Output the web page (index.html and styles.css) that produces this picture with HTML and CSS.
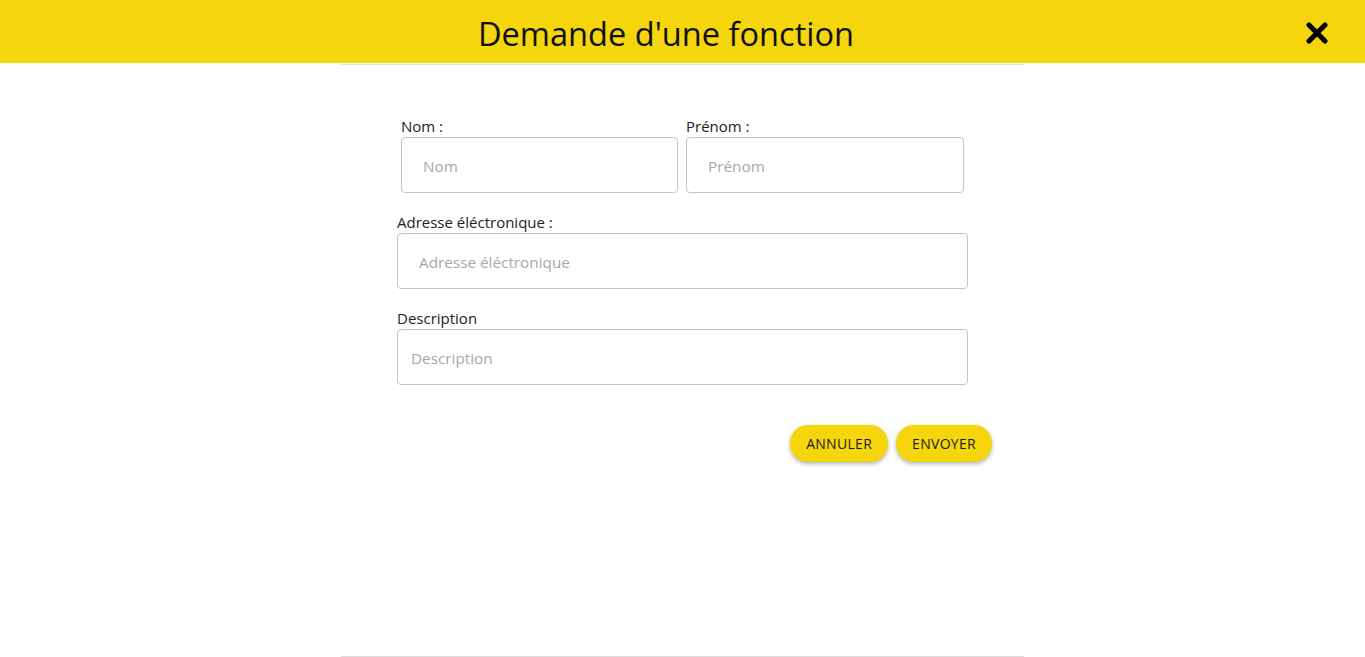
FILE: index.html
```html
<!DOCTYPE html>
<html lang="fr">
<head>
<meta charset="utf-8">
<title>Demande d'une fonction</title>
<link rel="stylesheet" href="styles.css">
</head>
<body>
<header class="topbar">
  <h1 class="topbar-title">Demande d'une fonction</h1>
  <button class="close-btn" type="button" aria-label="Fermer">
    <svg width="24" height="24" viewBox="0 0 24 24"><path d="M4 4 L20 20 M20 4 L4 20" stroke="#000" stroke-width="5.2" stroke-linecap="round" fill="none"/></svg>
  </button>
</header>
<main class="dialog">
  <form class="form">
    <div class="row-2">
      <div class="field">
        <label class="field-label">Nom :</label>
        <input class="field-input" type="text" placeholder="Nom">
      </div>
      <div class="field">
        <label class="field-label">Prénom :</label>
        <input class="field-input" type="text" placeholder="Prénom">
      </div>
    </div>
    <div class="field">
      <label class="field-label">Adresse éléctronique :</label>
      <input class="field-input" type="text" placeholder="Adresse éléctronique">
    </div>
    <div class="field">
      <label class="field-label">Description</label>
      <input class="field-input field-input-narrow" type="text" placeholder="Description">
    </div>
    <div class="actions">
      <button class="btn" type="button">Annuler</button>
      <button class="btn" type="button">Envoyer</button>
    </div>
  </form>
</main>
</body>
</html>
```

FILE: styles.css
```css
* { box-sizing: border-box; }
html, body { margin: 0; padding: 0; height: 100%; }
body {
  font-family: "Open Sans", "Noto Sans", sans-serif;
  color: #222;
  background: #fff;
  display: flex;
  flex-direction: column;
}
.topbar {
  position: relative;
  height: 63px;
  background: #f5d60d;
  display: flex;
  align-items: center;
  flex-shrink: 0;
}
.topbar-title {
  flex: 1;
  margin: 0;
  padding: 3px 33px 0 0;
  text-align: center;
  font-weight: 400;
  font-size: 32.6px;
  color: #111;
  letter-spacing: 0;
}
.close-btn {
  position: absolute;
  right: 35px;
  top: 20px;
  width: 26px;
  height: 26px;
  padding: 1px;
  border: 0;
  background: transparent;
  display: flex;
  align-items: center;
  justify-content: center;
}
.dialog {
  flex: 1;
  width: 683px;
  margin: 1px auto 0;
  border-top: 1px solid #e0e0e0;
  border-bottom: 1px solid #dcdcdc;
}
.form {
  padding: 52px 56px 0 56px;
  display: flex;
  flex-direction: column;
  gap: 20px;
}
.row-2 {
  display: grid;
  grid-template-columns: 277px 278px;
  gap: 8px;
  padding: 0 4px;
}
.field {
  display: flex;
  flex-direction: column;
}
.field-label {
  font-size: 15px;
  line-height: 18px;
  height: 20px;
  color: #222;
}
.field-input {
  height: 56px;
  width: 100%;
  border: 1px solid #c4c4c4;
  border-radius: 4px;
  padding: 1px 21px 0;
  font-family: inherit;
  font-size: 15.3px;
  color: #222;
  background: #fff;
  outline: none;
}
.field-input-narrow { padding: 1px 13px 0; }
.field-input::placeholder { color: #a8a8a8; }
.actions {
  display: flex;
  justify-content: flex-end;
  gap: 8px;
  margin-top: 20px;
  margin-right: -24px;
}
.btn {
  height: 37px;
  padding: 0 16px;
  border: 0;
  border-radius: 18px;
  background: #f5d60d;
  font-family: inherit;
  font-size: 14px;
  font-weight: 500;
  letter-spacing: 0.3px;
  text-transform: uppercase;
  color: #1a1a1a;
  box-shadow: 0 2px 4px rgba(0,0,0,0.3);
}
```
